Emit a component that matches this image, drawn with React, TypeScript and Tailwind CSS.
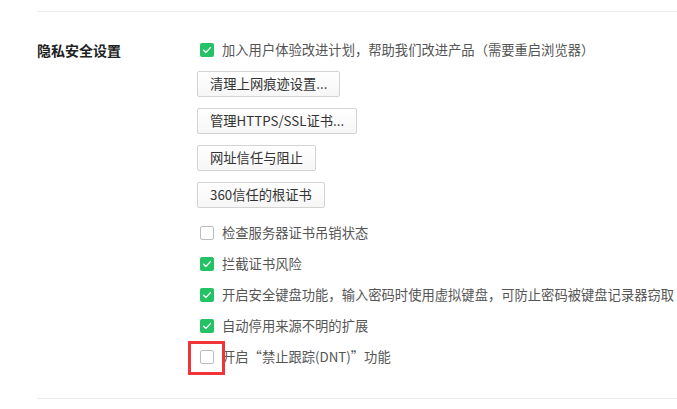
import React from 'react';

const font = { fontFamily: '"Noto Sans CJK SC", "Microsoft YaHei", sans-serif' };

function Checkbox({ checked, highlight }: { checked: boolean; highlight?: boolean }) {
  return (
    <span className="relative flex h-[14px] w-[14px] shrink-0">
      {checked ? (
        <span className="flex h-[14px] w-[14px] items-center justify-center rounded-[2px] bg-[#23c264]">
          <svg width="10" height="10" viewBox="0 0 10 10" fill="none">
            <path d="M1.6 5.2 L4 7.4 L8.4 2.6" stroke="#fff" strokeWidth="1.4" strokeLinecap="round" strokeLinejoin="round" />
          </svg>
        </span>
      ) : (
        <span className="h-[14px] w-[14px] rounded-[2px] border border-[#bdbdbd] bg-white" />
      )}
      {/* red highlight frame */}
      {highlight && (
        <span className="absolute left-[-12px] top-[-9px] h-[34px] w-[37px] border-[3px] border-[#f0343a]" />
      )}
    </span>
  );
}

function CheckRow({ label, checked, highlight }: { label: string; checked: boolean; highlight?: boolean }) {
  return (
    <label className="flex h-[20px] items-center gap-[8px]">
      <Checkbox checked={checked} highlight={highlight} />
      <span className="whitespace-nowrap text-[13.3px] leading-[20px] text-[#555]">{label}</span>
    </label>
  );
}

function Btn({ children }: { children: React.ReactNode }) {
  return (
    <button className="flex h-[26px] w-fit items-center rounded-[2px] border border-[#d3d3d3] bg-gradient-to-b from-white to-[#f6f6f6] px-[12px] text-[13.3px] text-[#333]">
      {children}
    </button>
  );
}

export default function App() {
  return (
    <div className="h-[409px] w-[677px] overflow-hidden bg-white pt-[11px]" style={font}>
      <section className="ml-[37px] flex border-y border-[#ececec] pb-[31px] pt-[28px]">
        <h2 className="w-[163px] shrink-0 text-[14px] font-bold leading-[20px] text-[#222]">隐私安全设置</h2>

        <div className="flex flex-col gap-[11px] pl-[0px]">
          <CheckRow checked label="加入用户体验改进计划，帮助我们改进产品（需要重启浏览器）" />
          <div className="-ml-[3px] flex flex-col gap-[11px]">
            <Btn>清理上网痕迹设置...</Btn>
            <Btn>管理HTTPS/SSL证书...</Btn>
            <Btn>网址信任与阻止</Btn>
            <Btn>360信任的根证书</Btn>
          </div>
          <div className="mt-[4px] flex flex-col gap-[11px]">
            <CheckRow checked={false} label="检查服务器证书吊销状态" />
            <CheckRow checked label="拦截证书风险" />
            <CheckRow checked label="开启安全键盘功能，输入密码时使用虚拟键盘，可防止密码被键盘记录器窃取" />
            <CheckRow checked label="自动停用来源不明的扩展" />
            <CheckRow checked={false} highlight label="开启“禁止跟踪(DNT)”功能" />
          </div>
        </div>
      </section>
    </div>
  );
}
